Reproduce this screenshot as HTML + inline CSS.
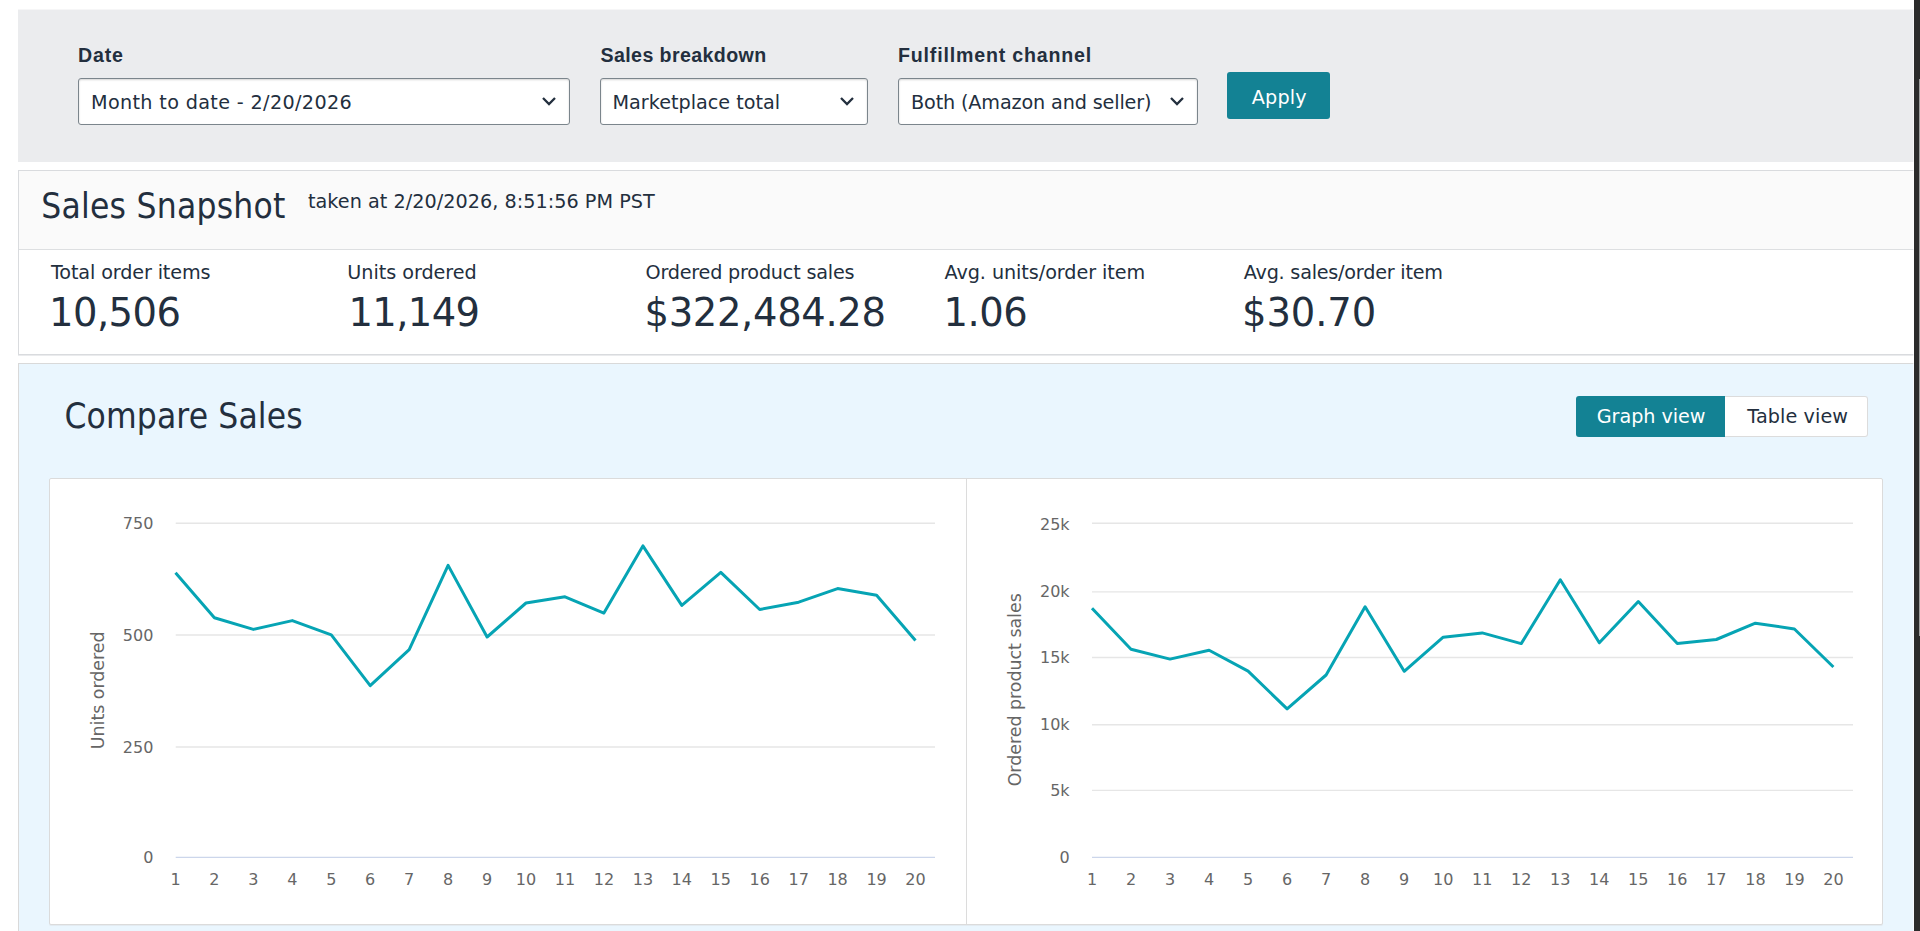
<!DOCTYPE html>
<html lang="en">
<head>
<meta charset="utf-8">
<title>Sales Dashboard</title>
<style>
*{box-sizing:border-box;margin:0;padding:0}
html,body{width:1920px;height:931px;overflow:hidden;background:#fff}
body{position:relative;font-family:"DejaVu Sans","Liberation Sans",sans-serif;color:#232f3e}
.abs{position:absolute}
.t{position:absolute;white-space:nowrap;color:#232f3e}
.t.w{color:#fff}
.filters{left:18px;top:10px;width:1896px;height:152px;background:#ebecee;box-shadow:0 -1px 0 rgba(235,236,238,.45)}
.sel{position:absolute;top:68px;height:47px;background:#fff;border:1px solid #7b858c;border-radius:3px;box-shadow:inset 0 1px 2px rgba(15,17,17,.18)}
.chev{position:absolute;right:12px;top:17px}
.apply{left:1209px;top:62px;padding:0;width:103px;height:47px;background:#138294;border-radius:3px;border:0}
.snap{left:18px;top:170px;width:1900px;height:185px;border:1px solid #d9dbde;background:#fff;box-shadow:0 1px 0 rgba(217,219,222,.55)}
.snaphead{left:0;top:0;width:100%;height:79px;background:#fafafa;border-bottom:1px solid #dddfe1}
.cmp{left:18px;top:363px;width:1900px;height:600px;border:1px solid #d9d9d9;background:#eaf6fe}
.seg{top:32px;height:41px;padding:0;border:0}
.seg.on{left:1557px;width:149px;background:#138294;border-radius:3px 0 0 3px}
.seg.off{left:1706px;width:143px;background:#fff;border:1px solid #dcdcdc;border-left:0;border-radius:0 3px 3px 0}
.chartbox{left:30px;top:114px;width:1834px;height:447px;background:#fff;border:1px solid #dbdbdb;border-radius:2px;box-shadow:0 1px 0 rgba(219,224,228,.5)}
.chartbox .div{left:916px;top:0;width:1px;height:100%;background:#dcdcdc}
svg.chart{position:absolute;left:-1px;top:-1px;font-family:"DejaVu Sans","Liberation Sans",sans-serif}
.grid path{stroke:#e6e6e6;stroke-width:1.4;fill:none}
.axis path{stroke:#ccd6eb;stroke-width:1.4;fill:none}
.ylab text{font-size:16px;fill:#666;text-anchor:end}
.xlab text{font-size:16px;fill:#666;text-anchor:middle}
.ytitle{font-size:17.4px;fill:#666;text-anchor:middle}
.series{fill:none;stroke:#06a4b4;stroke-width:3;stroke-linejoin:round;stroke-linecap:butt}
.sb{left:1914px;top:0;width:6px;height:931px;background:#2b2b2b}
.sb::before{content:"";position:absolute;left:-1px;top:0;width:1px;height:100%;background:rgba(255,255,255,.6)}
.sb i{position:absolute;left:5px;top:79px;width:1px;height:557px;background:#9e9e9e}
</style>
</head>
<body>
<form class="abs filters">
  <label id="l1" class="t lbl" style="left:60.00px;top:33.00px;font:bold 19.6px/24px 'Liberation Sans','DejaVu Sans',sans-serif;letter-spacing:0.843px">Date</label>
  <label id="l2" class="t lbl" style="left:582.50px;top:33.00px;font:bold 19.6px/24px 'Liberation Sans','DejaVu Sans',sans-serif;letter-spacing:0.403px">Sales breakdown</label>
  <label id="l3" class="t lbl" style="left:880.00px;top:33.00px;font:bold 19.6px/24px 'Liberation Sans','DejaVu Sans',sans-serif;letter-spacing:0.814px">Fulfillment channel</label>
  <div class="sel" style="left:60px;width:492px"><span id="s1" class="t" style="left:12.00px;top:12.00px;font:normal 19.2px/23px 'DejaVu Sans','Liberation Sans',sans-serif;letter-spacing:0.347px">Month to date - 2/20/2026</span><svg class="chev" width="16" height="11" viewBox="0 0 16 11" aria-hidden="true"><path d="M2 2 L8 8 L14 2" fill="none" stroke="#232f3e" stroke-width="2.3"/></svg></div>
  <div class="sel" style="left:582px;width:268px"><span id="s2" class="t" style="left:11.50px;top:12.00px;font:normal 19.2px/23px 'DejaVu Sans','Liberation Sans',sans-serif;letter-spacing:0.002px">Marketplace total</span><svg class="chev" width="16" height="11" viewBox="0 0 16 11" aria-hidden="true"><path d="M2 2 L8 8 L14 2" fill="none" stroke="#232f3e" stroke-width="2.3"/></svg></div>
  <div class="sel" style="left:880px;width:300px"><span id="s3" class="t" style="left:12.00px;top:12.00px;font:normal 19.2px/23px 'DejaVu Sans','Liberation Sans',sans-serif;letter-spacing:-0.138px">Both (Amazon and seller)</span><svg class="chev" width="16" height="11" viewBox="0 0 16 11" aria-hidden="true"><path d="M2 2 L8 8 L14 2" fill="none" stroke="#232f3e" stroke-width="2.3"/></svg></div>
  <button type="button" class="abs apply"><span id="ap" class="t w" style="left:24.75px;top:13.75px;font:normal 19.2px/23px 'DejaVu Sans','Liberation Sans',sans-serif;letter-spacing:0.171px">Apply</span></button>
</form>

<section class="abs snap">
  <header class="abs snaphead"></header>
  <h1 id="h1" class="t" style="left:22.25px;top:14.00px;font:normal 35px/42px 'DejaVu Sans Condensed','Liberation Sans','DejaVu Sans',sans-serif;letter-spacing:0.235px">Sales Snapshot</h1>
  <span id="tk" class="t" style="left:289.00px;top:18.75px;font:normal 19.2px/23px 'DejaVu Sans','Liberation Sans',sans-serif;letter-spacing:0.037px">taken at 2/20/2026, 8:51:56 PM PST</span>
  <span id="m1l" class="t" style="left:32.00px;top:89.75px;font:normal 19.2px/23px 'DejaVu Sans','Liberation Sans',sans-serif;letter-spacing:-0.126px">Total order items</span><span id="m1v" class="t" style="left:30.00px;top:119.30px;font:normal 38.5px/46px 'DejaVu Sans','Liberation Sans',sans-serif;letter-spacing:-0.544px">10,506</span>
  <span id="m2l" class="t" style="left:328.25px;top:89.75px;font:normal 19.2px/23px 'DejaVu Sans','Liberation Sans',sans-serif;letter-spacing:-0.038px">Units ordered</span><span id="m2v" class="t" style="left:329.50px;top:119.30px;font:normal 38.5px/46px 'DejaVu Sans','Liberation Sans',sans-serif;letter-spacing:-0.644px">11,149</span>
  <span id="m3l" class="t" style="left:626.50px;top:89.75px;font:normal 19.2px/23px 'DejaVu Sans','Liberation Sans',sans-serif;letter-spacing:-0.199px">Ordered product sales</span><span id="m3v" class="t" style="left:625.50px;top:119.30px;font:normal 38.5px/46px 'DejaVu Sans','Liberation Sans',sans-serif;letter-spacing:-0.344px">$322,484.28</span>
  <span id="m4l" class="t" style="left:925.50px;top:89.75px;font:normal 19.2px/23px 'DejaVu Sans','Liberation Sans',sans-serif;letter-spacing:-0.065px">Avg. units/order item</span><span id="m4v" class="t" style="left:924.50px;top:119.30px;font:normal 38.5px/46px 'DejaVu Sans','Liberation Sans',sans-serif;letter-spacing:-0.493px">1.06</span>
  <span id="m5l" class="t" style="left:1224.75px;top:89.75px;font:normal 19.2px/23px 'DejaVu Sans','Liberation Sans',sans-serif;letter-spacing:-0.225px">Avg. sales/order item</span><span id="m5v" class="t" style="left:1223.00px;top:119.30px;font:normal 38.5px/46px 'DejaVu Sans','Liberation Sans',sans-serif;letter-spacing:-0.094px">$30.70</span>
</section>

<section class="abs cmp">
  <h2 id="h2" class="t" style="left:45.50px;top:31.25px;font:normal 35px/42px 'DejaVu Sans Condensed','Liberation Sans','DejaVu Sans',sans-serif;letter-spacing:0.130px">Compare Sales</h2>
  <button type="button" class="abs seg on"><span id="gv" class="t w" style="left:20.80px;top:9.25px;font:normal 19.2px/23px 'DejaVu Sans','Liberation Sans',sans-serif;letter-spacing:-0.049px">Graph view</span></button>
  <button type="button" class="abs seg off"><span id="tv" class="t" style="left:22.30px;top:8.25px;font:normal 19.2px/23px 'DejaVu Sans','Liberation Sans',sans-serif;letter-spacing:0.088px">Table view</span></button>
  <div class="abs chartbox"><div class="abs div"></div><svg class="chart" width="1834" height="447" viewBox="0 0 1834 447">
<g class="grid"><path d="M126.7 45.3 H886"/><path d="M126.7 157.0 H886"/><path d="M126.7 269.0 H886"/><path d="M1043.0 45.2 H1804"/><path d="M1043.0 113.9 H1804"/><path d="M1043.0 179.5 H1804"/><path d="M1043.0 246.7 H1804"/><path d="M1043.0 312.4 H1804"/></g>
<g class="axis"><path d="M126.69999999999999 379.4 H886"/><path d="M1043 379.4 H1804"/></g>
<g class="ylab"><text x="104.4" y="51.1">750</text><text x="104.4" y="162.8">500</text><text x="104.4" y="274.8">250</text><text x="104.4" y="385.4">0</text><text x="1020.5999999999999" y="51.8">25k</text><text x="1020.5999999999999" y="119.0">20k</text><text x="1020.5999999999999" y="184.8">15k</text><text x="1020.5999999999999" y="252.0">10k</text><text x="1020.5999999999999" y="318.2">5k</text><text x="1020.5999999999999" y="385.4">0</text></g>
<g class="xlab"><text x="126.5" y="406.5">1</text><text x="165.4" y="406.5">2</text><text x="204.4" y="406.5">3</text><text x="243.3" y="406.5">4</text><text x="282.3" y="406.5">5</text><text x="321.2" y="406.5">6</text><text x="360.2" y="406.5">7</text><text x="399.1" y="406.5">8</text><text x="438.1" y="406.5">9</text><text x="477.0" y="406.5">10</text><text x="516.0" y="406.5">11</text><text x="554.9" y="406.5">12</text><text x="593.9" y="406.5">13</text><text x="632.8" y="406.5">14</text><text x="671.8" y="406.5">15</text><text x="710.7" y="406.5">16</text><text x="749.7" y="406.5">17</text><text x="788.6" y="406.5">18</text><text x="827.6" y="406.5">19</text><text x="866.5" y="406.5">20</text><text x="1043.0" y="406.5">1</text><text x="1082.0" y="406.5">2</text><text x="1121.0" y="406.5">3</text><text x="1160.1" y="406.5">4</text><text x="1199.1" y="406.5">5</text><text x="1238.1" y="406.5">6</text><text x="1277.1" y="406.5">7</text><text x="1316.1" y="406.5">8</text><text x="1355.2" y="406.5">9</text><text x="1394.2" y="406.5">10</text><text x="1433.2" y="406.5">11</text><text x="1472.2" y="406.5">12</text><text x="1511.3" y="406.5">13</text><text x="1550.3" y="406.5">14</text><text x="1589.3" y="406.5">15</text><text x="1628.3" y="406.5">16</text><text x="1667.3" y="406.5">17</text><text x="1706.4" y="406.5">18</text><text x="1745.4" y="406.5">19</text><text x="1784.4" y="406.5">20</text></g>
<text class="ytitle" transform="translate(55 212.29999999999995) rotate(-90)">Units ordered</text>
<text class="ytitle" transform="translate(971.7 211.79999999999995) rotate(-90)">Ordered product sales</text>
<path class="series" d="M126.5 94.7 L165.4 139.8 L204.4 151.4 L243.3 142.6 L282.3 156.8 L321.2 207.7 L360.2 171.6 L399.1 87.4 L438.1 159.0 L477.0 125.0 L516.0 118.8 L554.9 135.1 L593.9 67.9 L632.8 127.4 L671.8 94.3 L710.7 131.5 L749.7 124.2 L788.6 110.6 L827.6 117.3 L866.5 162.4"/>
<path class="series" d="M1043.0 130.2 L1082.0 171.2 L1121.0 181.1 L1160.1 172.3 L1199.1 193.1 L1238.1 230.9 L1277.1 197.0 L1316.1 128.7 L1355.2 193.3 L1394.2 159.2 L1433.2 154.9 L1472.2 165.6 L1511.3 101.8 L1550.3 164.8 L1589.3 123.5 L1628.3 165.4 L1667.3 161.5 L1706.4 145.2 L1745.4 151.0 L1784.4 189.0"/>
</svg></div>
</section>
<div class="abs sb"><i></i></div>
</body>
</html>
